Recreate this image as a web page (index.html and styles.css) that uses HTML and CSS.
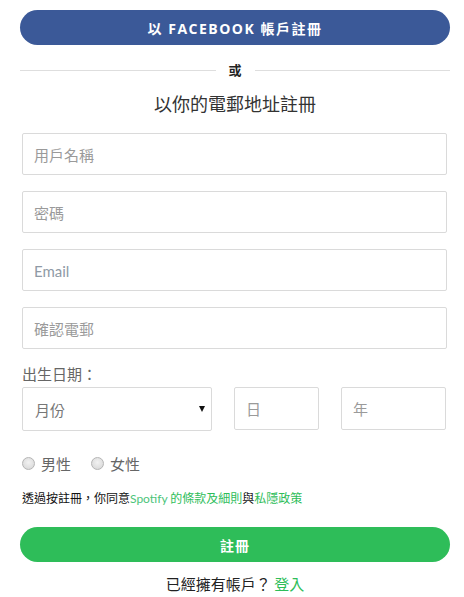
FILE: index.html
```html
<!DOCTYPE html>
<html lang="zh-Hant">

<head>
    <meta charset="UTF-8">
    <meta name="viewport" content="width=device-width, initial-scale=1.0">
    <title>註冊</title>
    <link rel="stylesheet" href="styles.css">
</head>

<body>
    <div class="signup">
        <button class="btn btn-facebook" type="button">以 FACEBOOK 帳戶註冊</button>

        <div class="divider"><span>或</span></div>

        <h2 class="titulo">以你的電郵地址註冊</h2>

        <form class="form">
            <input class="campo" type="text" placeholder="用戶名稱">
            <input class="campo" type="password" placeholder="密碼">
            <input class="campo campo-email" type="email" placeholder="Email">
            <input class="campo" type="email" placeholder="確認電郵">

            <label class="rotulo">出生日期：</label>
            <div class="data">
                <div class="select-wrap">
                    <select class="campo campo-mes">
                        <option>月份</option>
                        <option>一月</option>
                        <option>二月</option>
                    </select>
                </div>
                <input class="campo campo-dia" type="text" placeholder="日">
                <input class="campo campo-ano" type="text" placeholder="年">
            </div>

            <div class="genero">
                <label class="radio"><input type="radio" name="genero"><span class="bolinha"></span>男性</label>
                <label class="radio"><input type="radio" name="genero"><span class="bolinha"></span>女性</label>
            </div>

            <p class="termos">透過按註冊，你同意<a href="#" class="latin">Spotify</a><a href="#"> 的條款及細則</a>與<a href="#">私隱政策</a></p>

            <button class="btn btn-registrar" type="button">註冊</button>
        </form>

        <p class="login">已經擁有帳戶？ <a href="#">登入</a></p>
    </div>
</body>

</html>
```

FILE: styles.css
```css
body {
    margin: 0;
    background-color: #ffffff;
    color: #222222;
    font-family: 'Noto Sans CJK TC', 'Noto Sans', sans-serif;
}

.signup {
    padding: 10px 14px 0 20px;
    width: 430px;
}

.btn {
    display: block;
    width: 430px;
    height: 35px;
    border: none;
    border-radius: 18px;
    color: #ffffff;
    font-family: 'Open Sans', 'Noto Sans CJK TC', sans-serif;
    font-weight: bold;
    font-size: 13px;
    cursor: pointer;
    padding: 0;
}

.btn-facebook {
    background-color: #3b5998;
    font-size: 14px;
    letter-spacing: 1.5px;
}

.btn-registrar {
    background-color: #2ebd59;
    margin-top: 20px;
    font-size: 14px;
    letter-spacing: 1px;
}

.divider {
    display: flex;
    align-items: center;
    margin-top: 17px;
    height: 16px;
}

.divider::before,
.divider::after {
    content: "";
    flex: 1;
    border-top: 1px solid #dedede;
}

.divider span {
    padding: 0 13px;
    font-size: 13px;
    line-height: 16px;
    font-weight: bold;
    color: #222222;
}

.titulo {
    margin: 13px 0 0;
    text-align: center;
    font-size: 18px;
    line-height: 24px;
    font-weight: normal;
    color: #333333;
}

.form {
    margin-top: 18px;
}

.campo {
    display: block;
    box-sizing: border-box;
    width: 425px;
    height: 42px;
    margin: 0 0 16px 2px;
    padding: 0 11px;
    border: 1px solid #dadada;
    border-radius: 2px;
    background-color: #ffffff;
    font-family: 'Noto Sans CJK TC', sans-serif;
    font-size: 15px;
    color: #333333;
    outline: none;
}

.campo::placeholder {
    color: #9a9a9a;
}

.campo-email::placeholder {
    font-family: 'Lato', sans-serif;
    font-size: 15px;
    color: #8f9aa6;
}

.rotulo {
    display: block;
    margin-top: -1px;
    font-size: 15px;
    line-height: 20px;
    color: #666666;
    padding-left: 2px;
}

.data {
    display: flex;
    gap: 22px;
    margin-top: 3px;
    padding-left: 2px;
    align-items: flex-start;
}

.data .campo {
    margin: 0;
}

.select-wrap {
    position: relative;
}

.select-wrap::after {
    content: "";
    position: absolute;
    right: 7px;
    top: 19px;
    border-left: 3px solid transparent;
    border-right: 3px solid transparent;
    border-top: 6px solid #111111;
    pointer-events: none;
}

.campo-mes {
    width: 190px;
    height: 44px;
    appearance: none;
    -webkit-appearance: none;
    padding-left: 12px;
    color: #777777;
}

.campo-dia {
    width: 85px;
    height: 43px;
}

.campo-ano {
    width: 105px;
    height: 43px;
}

.genero {
    display: flex;
    gap: 20px;
    margin-top: 22px;
    height: 20px;
    align-items: center;
    padding-left: 2px;
}

.radio {
    display: flex;
    align-items: center;
    font-size: 15px;
    color: #666666;
    cursor: pointer;
}

.radio input {
    display: none;
}

.bolinha {
    box-sizing: border-box;
    width: 13px;
    height: 13px;
    margin-right: 6px;
    border-radius: 50%;
    border: 1px solid #b5b5b5;
    background: radial-gradient(circle at 50% 40%, #f2f2f2, #d4d4d4);
}

.termos {
    margin: 17px 0 0;
    font-size: 12px;
    line-height: 16px;
    color: #111111;
    padding-left: 2px;
}

.termos a {
    color: #2ebd59;
    text-decoration: none;
}

.termos .latin {
    font-family: 'Lato', sans-serif;
    color: #4cc47a;
}

.login {
    margin: 12px 0 0;
    text-align: center;
    font-size: 15px;
    line-height: 20px;
    color: #222222;
}

.login a {
    color: #2ebd59;
    text-decoration: none;
}
```
